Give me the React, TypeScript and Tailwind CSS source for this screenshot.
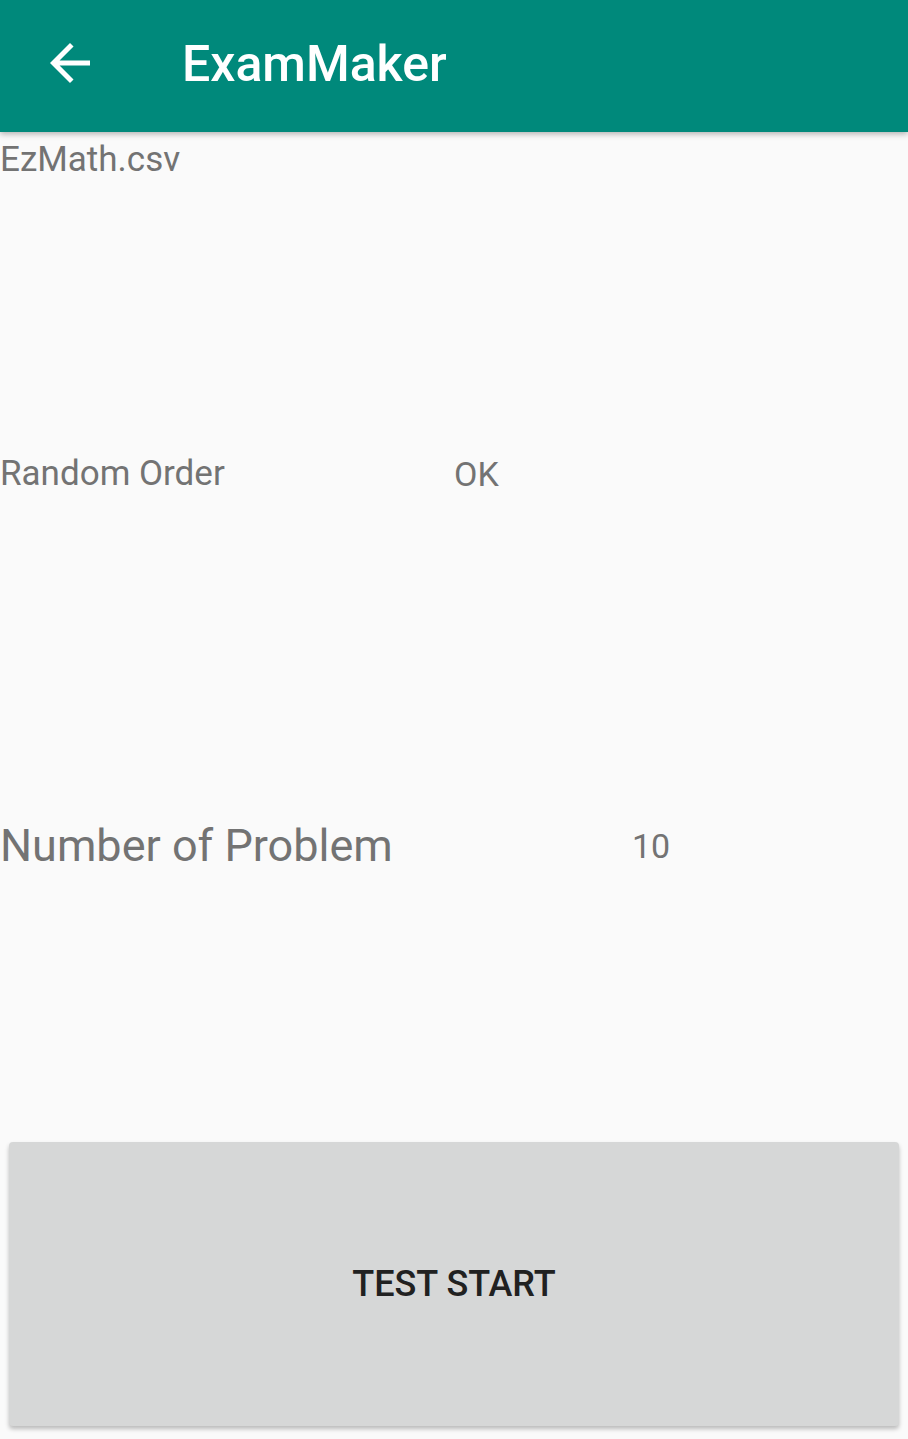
export default function App() {
    return (
        <div className="flex h-[1439px] w-[908px] flex-col overflow-hidden bg-[#fafafa] font-['Roboto',sans-serif]">
            {/* App bar */}
            <header className="z-10 flex h-[132px] shrink-0 items-center bg-[#00897b] shadow-[0_2px_6px_rgba(0,0,0,0.3)]">
                <svg
                    viewBox="0 0 24 24"
                    className="mb-[6px] ml-[40px] h-[60px] w-[60px] fill-white"
                >
                    <path d="M20 11H7.83l5.59-5.59L12 4l-8 8 8 8 1.41-1.41L7.83 13H20v-2z" />
                </svg>
                <h1 className="mb-[4px] ml-[82px] text-[50px] font-medium leading-none text-white">
                    ExamMaker
                </h1>
            </header>

            {/* File name */}
            <div className="mt-[8px] text-[35px] leading-[40px] text-[#737373]">
                EzMath.csv
            </div>

            {/* Random order */}
            <div className="mt-[274px] flex items-center text-[35px] leading-[40px] text-[#737373]">
                <span className="w-[454px]">Random Order</span>
                <span className="text-[34px]">OK</span>
            </div>

            {/* Number of problems */}
            <div className="mt-[322px] flex items-center text-[#737373]">
                <span className="w-[632px] text-[45px] leading-[60px]">
                    Number of Problem
                </span>
                <span className="text-[34px] leading-[60px]">10</span>
            </div>

            {/* Start button */}
            <div className="mt-auto px-[9px] pb-[13px]">
                <button
                    type="button"
                    className="flex h-[284px] w-full items-center justify-center rounded-[4px] bg-[#d6d7d7] text-[36px] font-medium text-[#212121] shadow-[0_3px_4px_rgba(0,0,0,0.25)]"
                >
                    TEST START
                </button>
            </div>
        </div>
    );
}
